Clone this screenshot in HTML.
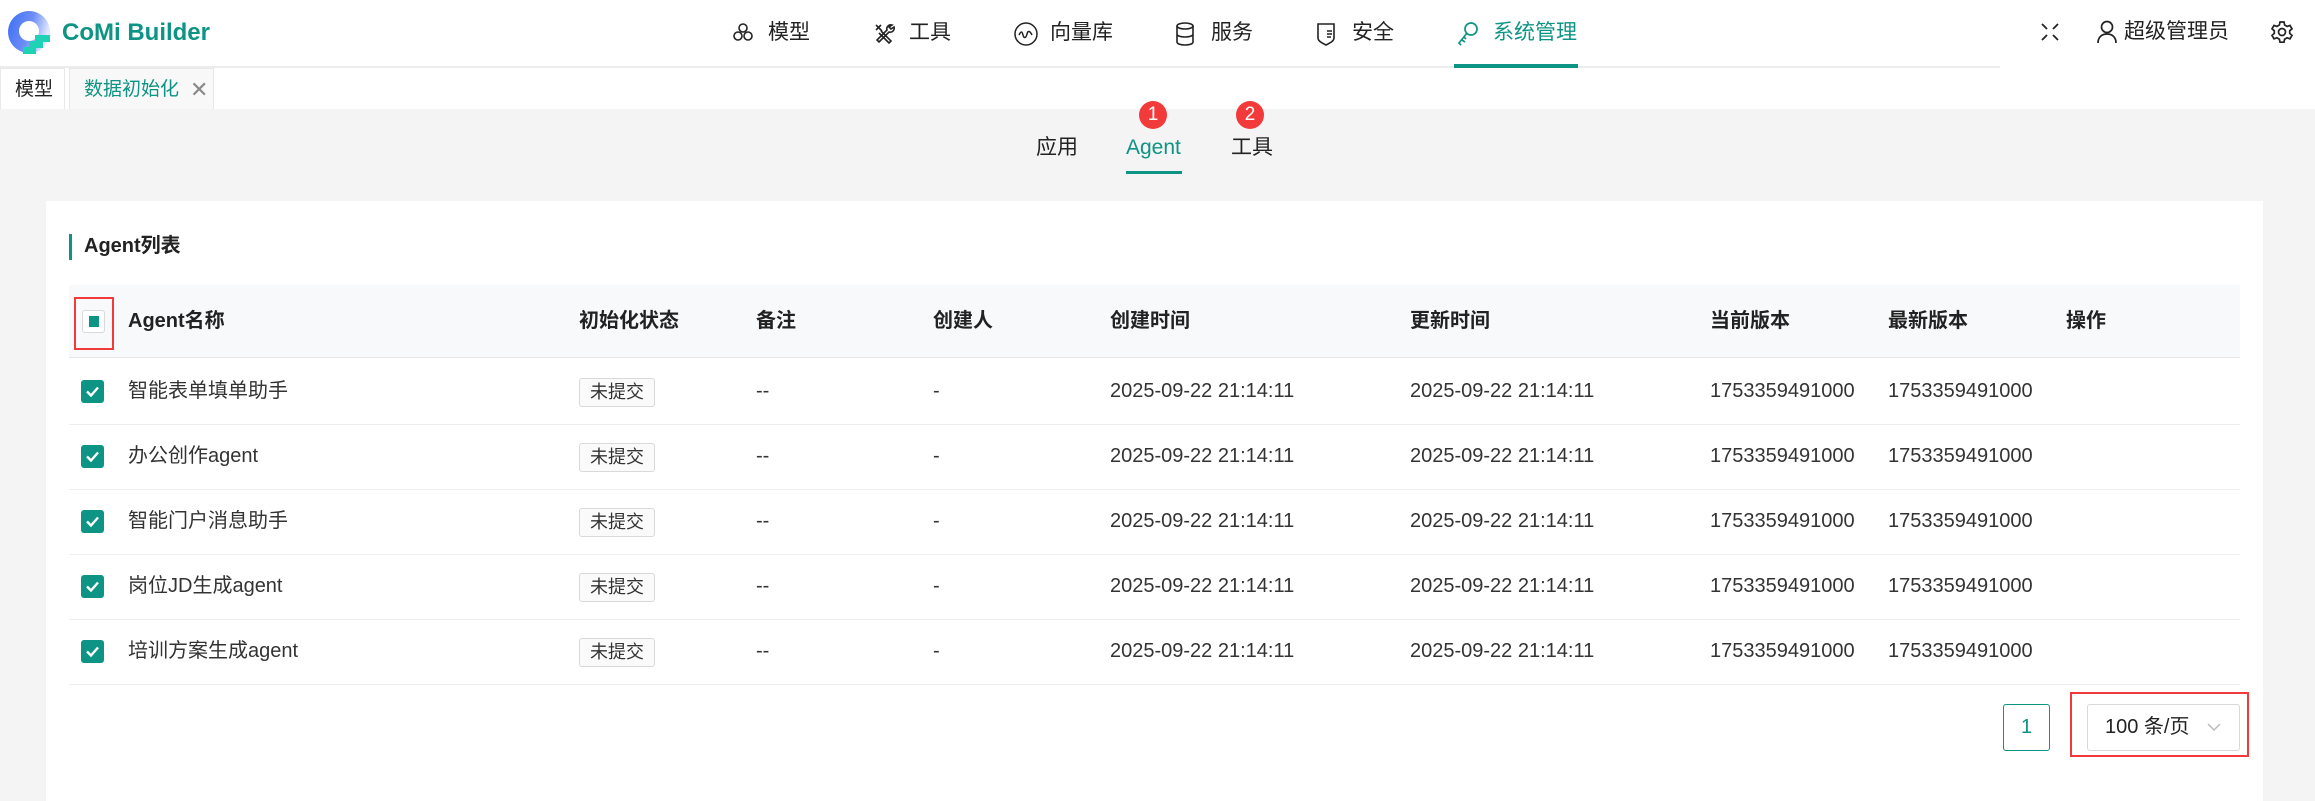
<!DOCTYPE html>
<html><head><meta charset="utf-8"><style>
*{margin:0;padding:0;box-sizing:border-box}
body{width:2315px;height:784px;overflow:hidden;background:#f4f4f4;font-family:"Liberation Sans","Noto Sans CJK SC",sans-serif;color:#222;position:relative}
.abs{position:absolute}
.hdr{left:0;top:0;width:2315px;height:68px;background:#fff}
.hline{left:0;top:66px;width:2000px;height:2px;background:#ececec}
.nav{top:18px;font-size:21px;line-height:30px;color:#222;white-space:nowrap}
.nav svg{position:absolute;left:-37px;top:3px}
.g{color:#0e9484}
.tabbar{left:0;top:68px;width:2315px;height:41px;background:#fff}
.t{top:0;height:41px;font-size:19px;line-height:41px;padding:0 14px;border:1px solid #e8e8e8;border-bottom:none;white-space:nowrap}
.sub{top:133px;font-size:21px;line-height:30px}
.badge{width:28px;height:28px;border-radius:50%;background:#f23a3a;color:#fff;font-size:19px;line-height:28px;text-align:center;top:101px}
.card{left:46px;top:201px;width:2217px;height:600px;background:#fff}
.th{left:69px;top:285px;width:2171px;height:73px;background:#f8f9fb;border-bottom:1px solid #e8e8e8}
.cell{font-size:20px;line-height:28px;white-space:nowrap;color:#333}
.hc{font-weight:bold;color:#222;top:307px}
.rowb{left:69px;width:2171px;height:1px;background:#eeeeee}
.cb{width:23px;height:23px;border-radius:3px;background:#0e9484}
.cb svg{position:absolute;left:3px;top:3px}
.tag{width:76px;height:29px;border:1px solid #d9d9d9;background:#fafafa;border-radius:3px;font-size:18px;line-height:27px;text-align:center;color:#333}
</style></head><body>
<div class="abs hdr"></div>
<div class="abs hline"></div>
<svg class="abs" style="left:7px;top:10px" width="44" height="44" viewBox="0 0 44 44">
<defs><linearGradient id="lg" x1="0" y1="0" x2="1" y2="0.3"><stop offset="0" stop-color="#3c6df5"/><stop offset="0.6" stop-color="#6f8ff7"/><stop offset="1" stop-color="#dfe6fd"/></linearGradient></defs>
<path fill-rule="evenodd" d="M22 1a21 21 0 1 0 0.01 0zM22 11a10 10 0 1 1-0.01 0z" fill="url(#lg)"/>
<path d="M16 44V37h6v-6h6v-6h15v7h-7v6h-7v6z" fill="#1fd1b5"/>
<path d="M28 25h15v7h-7v6h-7v6h-13v-7h6v-6h6z" fill="#fff" opacity="0"/>
</svg>
<div class="abs g" style="left:62px;top:16px;font-size:24px;font-weight:bold;line-height:34px">CoMi Builder</div>

<div class="abs nav" style="left:768px"><svg width="24" height="24" viewBox="0 0 24 24" fill="none" stroke="#222" stroke-width="1.6"><circle cx="12" cy="7" r="4"/><circle cx="7" cy="15" r="4"/><circle cx="17" cy="15" r="4"/></svg>模型</div>
<div class="abs nav" style="left:909px"><svg width="24" height="24" viewBox="0 0 24 24" fill="none" stroke="#222" stroke-width="1.6"><path d="M4 4l6 6M4 9l5-5M9 10l10 10-2 2L7 12M20 4a4 4 0 0 0-5 5L5 19l2 2 10-10a4 4 0 0 0 5-5l-3 2-2-2z"/></svg>工具</div>
<div class="abs nav" style="left:1050px"><svg width="26" height="26" viewBox="0 0 26 26" fill="none" stroke="#222" stroke-width="1.5"><circle cx="13" cy="13" r="11"/><path d="M6 14c2-4 3-4 4 0s3 3 4-1 3-3 5 1"/></svg>向量库</div>
<div class="abs nav" style="left:1211px"><svg width="22" height="26" viewBox="0 0 22 26" fill="none" stroke="#222" stroke-width="1.6"><ellipse cx="11" cy="5" rx="8" ry="3"/><path d="M3 5v16c0 2 4 3 8 3s8-1 8-3V5M3 13c0 2 4 3 8 3s8-1 8-3"/></svg>服务</div>
<div class="abs nav" style="left:1352px"><svg width="22" height="26" viewBox="0 0 22 26" fill="none" stroke="#222" stroke-width="1.6"><path d="M3 3h16v14c0 3-4 5-8 7-4-2-8-4-8-7z"/><path d="M12 10h5M12 13h5M12 16h4"/></svg>安全</div>
<div class="abs nav g" style="left:1493px"><svg width="24" height="26" viewBox="0 0 24 26" fill="none" stroke="#0e9484" stroke-width="1.7"><circle cx="15" cy="8" r="6"/><path d="M11 12L3 22l2 2M6 19l3 2M8 16l2 2"/></svg>系统管理</div>
<div class="abs" style="left:1454px;top:64px;width:124px;height:4px;background:#0e9484"></div>

<svg class="abs" style="left:2040px;top:22px" width="20" height="20" viewBox="0 0 20 20" fill="none" stroke="#222" stroke-width="1.8"><path d="M2 2l5 5M18 2l-5 5M2 18l5-5M18 18l-5-5"/></svg>
<svg class="abs" style="left:2096px;top:20px" width="22" height="24" viewBox="0 0 22 24" fill="none" stroke="#222" stroke-width="1.7"><circle cx="11" cy="7" r="5.5"/><path d="M2 23c0-6 4-9 9-9s9 3 9 9"/></svg>
<div class="abs nav" style="left:2124px;top:17px">超级管理员</div>
<svg class="abs" style="left:2270px;top:20px" width="24" height="24" viewBox="0 0 24 24" fill="none" stroke="#222" stroke-width="1.7"><circle cx="12" cy="12" r="3.5"/><path d="M10 2h4l.6 3 2.5 1.4 2.9-1 2 3.4-2.3 2v2.6l2.3 2-2 3.4-2.9-1-2.5 1.4-.6 3h-4l-.6-3-2.5-1.4-2.9 1-2-3.4 2.3-2v-2.6l-2.3-2 2-3.4 2.9 1L9.4 5z"/></svg>

<div class="abs tabbar"></div>
<div class="abs t" style="left:0;top:68px;width:65px;padding:0 0 0 14px;background:#fff">模型</div>
<div class="abs t g" style="left:69px;top:68px;width:145px;padding:0 0 0 14px;background:#f8f8f8">数据初始化<span style="color:#888;position:absolute;left:120px;font-size:22px">✕</span></div>

<div class="abs sub" style="left:1036px">应用</div>
<div class="abs sub g" style="left:1126px">Agent</div>
<div class="abs sub" style="left:1231px">工具</div>
<div class="abs" style="left:1126px;top:171px;width:56px;height:3px;background:#0e9484"></div>
<div class="abs badge" style="left:1139px">1</div>
<div class="abs badge" style="left:1236px">2</div>

<div class="abs card"></div>
<div class="abs" style="left:69px;top:234px;width:3px;height:26px;background:#0e9484"></div>
<div class="abs cell" style="left:84px;top:232px;font-weight:bold;color:#222">Agent列表</div>

<div class="abs th"></div>
<div class="abs" style="left:74px;top:297px;width:40px;height:53px;border:2px solid #f23a3a"></div>
<div class="abs" style="left:82px;top:310px;width:23px;height:23px;border:1px solid #d9d9d9;border-radius:3px;background:#fff"><div style="position:absolute;left:6px;top:5px;width:10px;height:11px;background:#0e9484"></div></div>
<div class="abs cell hc" style="left:128px">Agent名称</div>
<div class="abs cell hc" style="left:579px">初始化状态</div>
<div class="abs cell hc" style="left:756px">备注</div>
<div class="abs cell hc" style="left:933px">创建人</div>
<div class="abs cell hc" style="left:1110px">创建时间</div>
<div class="abs cell hc" style="left:1410px">更新时间</div>
<div class="abs cell hc" style="left:1710px">当前版本</div>
<div class="abs cell hc" style="left:1888px">最新版本</div>
<div class="abs cell hc" style="left:2066px">操作</div>

<div class="abs cb" style="left:81px;top:380px"><svg width="17" height="17" viewBox="0 0 17 17" fill="none" stroke="#fff" stroke-width="2.4"><path d="M3 8.5l4 4 7-8"/></svg></div>
<div class="abs cell" style="left:128px;top:377px">智能表单填单助手</div>
<div class="abs tag" style="left:579px;top:378px">未提交</div>
<div class="abs cell" style="left:756px;top:377px">--</div><div class="abs cell" style="left:933px;top:377px">-</div>
<div class="abs cell" style="left:1110px;top:377px">2025-09-22 21:14:11</div><div class="abs cell" style="left:1410px;top:377px">2025-09-22 21:14:11</div>
<div class="abs cell" style="left:1710px;top:377px">1753359491000</div><div class="abs cell" style="left:1888px;top:377px">1753359491000</div>
<div class="abs rowb" style="top:424px"></div>

<div class="abs cb" style="left:81px;top:445px"><svg width="17" height="17" viewBox="0 0 17 17" fill="none" stroke="#fff" stroke-width="2.4"><path d="M3 8.5l4 4 7-8"/></svg></div>
<div class="abs cell" style="left:128px;top:442px">办公创作agent</div>
<div class="abs tag" style="left:579px;top:443px">未提交</div>
<div class="abs cell" style="left:756px;top:442px">--</div><div class="abs cell" style="left:933px;top:442px">-</div>
<div class="abs cell" style="left:1110px;top:442px">2025-09-22 21:14:11</div><div class="abs cell" style="left:1410px;top:442px">2025-09-22 21:14:11</div>
<div class="abs cell" style="left:1710px;top:442px">1753359491000</div><div class="abs cell" style="left:1888px;top:442px">1753359491000</div>
<div class="abs rowb" style="top:489px"></div>

<div class="abs cb" style="left:81px;top:510px"><svg width="17" height="17" viewBox="0 0 17 17" fill="none" stroke="#fff" stroke-width="2.4"><path d="M3 8.5l4 4 7-8"/></svg></div>
<div class="abs cell" style="left:128px;top:507px">智能门户消息助手</div>
<div class="abs tag" style="left:579px;top:508px">未提交</div>
<div class="abs cell" style="left:756px;top:507px">--</div><div class="abs cell" style="left:933px;top:507px">-</div>
<div class="abs cell" style="left:1110px;top:507px">2025-09-22 21:14:11</div><div class="abs cell" style="left:1410px;top:507px">2025-09-22 21:14:11</div>
<div class="abs cell" style="left:1710px;top:507px">1753359491000</div><div class="abs cell" style="left:1888px;top:507px">1753359491000</div>
<div class="abs rowb" style="top:554px"></div>

<div class="abs cb" style="left:81px;top:575px"><svg width="17" height="17" viewBox="0 0 17 17" fill="none" stroke="#fff" stroke-width="2.4"><path d="M3 8.5l4 4 7-8"/></svg></div>
<div class="abs cell" style="left:128px;top:572px">岗位JD生成agent</div>
<div class="abs tag" style="left:579px;top:573px">未提交</div>
<div class="abs cell" style="left:756px;top:572px">--</div><div class="abs cell" style="left:933px;top:572px">-</div>
<div class="abs cell" style="left:1110px;top:572px">2025-09-22 21:14:11</div><div class="abs cell" style="left:1410px;top:572px">2025-09-22 21:14:11</div>
<div class="abs cell" style="left:1710px;top:572px">1753359491000</div><div class="abs cell" style="left:1888px;top:572px">1753359491000</div>
<div class="abs rowb" style="top:619px"></div>

<div class="abs cb" style="left:81px;top:640px"><svg width="17" height="17" viewBox="0 0 17 17" fill="none" stroke="#fff" stroke-width="2.4"><path d="M3 8.5l4 4 7-8"/></svg></div>
<div class="abs cell" style="left:128px;top:637px">培训方案生成agent</div>
<div class="abs tag" style="left:579px;top:638px">未提交</div>
<div class="abs cell" style="left:756px;top:637px">--</div><div class="abs cell" style="left:933px;top:637px">-</div>
<div class="abs cell" style="left:1110px;top:637px">2025-09-22 21:14:11</div><div class="abs cell" style="left:1410px;top:637px">2025-09-22 21:14:11</div>
<div class="abs cell" style="left:1710px;top:637px">1753359491000</div><div class="abs cell" style="left:1888px;top:637px">1753359491000</div>
<div class="abs rowb" style="top:684px"></div>

<div class="abs g" style="left:2003px;top:704px;width:47px;height:47px;border:1.5px solid #0e9484;border-radius:3px;font-size:20px;line-height:44px;text-align:center">1</div>
<div class="abs" style="left:2070px;top:692px;width:179px;height:65px;border:2px solid #f23a3a"></div>
<div class="abs" style="left:2087px;top:704px;width:153px;height:47px;border:1px solid #d9d9d9;border-radius:3px;background:#fff"></div>
<div class="abs cell" style="left:2105px;top:713px;color:#222">100 条/页</div>
<svg class="abs" style="left:2206px;top:721px" width="16" height="12" viewBox="0 0 16 12" fill="none" stroke="#bbb" stroke-width="1.5"><path d="M2 3l6 6 6-6"/></svg>
</body></html>
